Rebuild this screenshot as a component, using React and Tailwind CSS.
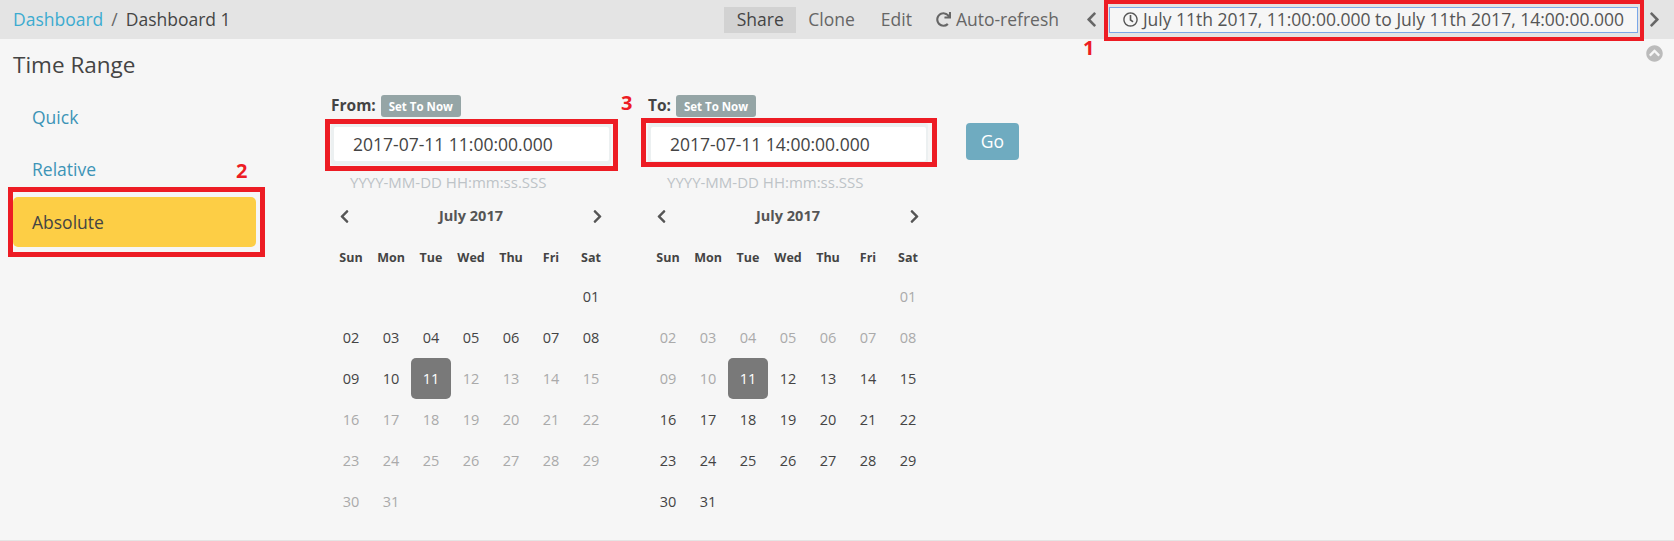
import React from 'react';
import { FaChevronLeft, FaChevronRight, FaChevronCircleUp, FaRegClock, FaRedo } from 'react-icons/fa';

const WEEK = ['Sun', 'Mon', 'Tue', 'Wed', 'Thu', 'Fri', 'Sat'];
const DAYS = Array.from({ length: 31 }, (_, i) => i + 1);

const Calendar = ({ activeFrom, activeTo }) => (
    <div className="w-[280px]">
        <div className="flex items-center justify-between h-[20px] px-[6px] text-[#555]">
            <FaChevronLeft className="text-[15px]" />
            <span className="text-[14.5px] font-bold">July 2017</span>
            <FaChevronRight className="text-[15px]" />
        </div>
        <div className="grid grid-cols-7 mt-[22px] h-[20px] items-center text-center text-[12.5px] font-bold text-[#444]">
            {WEEK.map((d) => (
                <div key={d}>{d}</div>
            ))}
        </div>
        <div className="grid grid-cols-7 auto-rows-[41px] mt-[8px] items-center justify-items-center text-center text-[14.5px]">
            <div className="col-span-6" />
            {DAYS.map((d) => {
                const label = String(d).padStart(2, '0');
                if (d === 11) {
                    return (
                        <div key={d} className="flex w-[40px] h-[41px] items-center justify-center rounded-[5px] bg-[#797979] text-white">
                            {label}
                        </div>
                    );
                }
                const active = d >= activeFrom && d <= activeTo;
                return (
                    <div key={d} className={active ? 'text-[#444]' : 'text-[#aaa]'}>
                        {label}
                    </div>
                );
            })}
        </div>
    </div>
);

const DateField = ({ label, value }) => (
    <div className="w-[280px]">
        <div className="flex items-center h-[22px]">
            <span className="text-[15.5px] font-bold text-[#444]">{label}</span>
            <span className="ml-[5px] flex h-[22px] w-[80px] items-center justify-center rounded-[3px] bg-[#95a5a6] pt-[1px] text-[11.5px] font-bold text-white">
                Set To Now
            </span>
        </div>
        <div className="mt-[6px] h-[42px] w-[280px] rounded-[3px] bg-[#ecf0f1] pt-[4px] pb-[4px] pl-[3px] pr-[2px]">
            <div className="flex h-[34px] items-center rounded-[2px] bg-white pl-[19px] text-[17.5px] text-[#444]">{value}</div>
        </div>
        <div className="mt-[6px] h-[22px] pl-[19px] text-[15px] leading-[22px] text-[#bdc3c7]">YYYY-MM-DD HH:mm:ss.SSS</div>
    </div>
);

const App = () => (
    <div className="relative h-[541px] w-[1674px] overflow-hidden border-b border-[#e4e4e4] bg-[#f6f6f6] font-['Open_Sans',sans-serif] text-[#444]">
        {/* Top bar */}
        <header className="flex h-[39px] items-center bg-[#e4e4e4] pl-[13px] pr-[11px] text-[17.5px]">
            <span className="text-[#3cabd0]">Dashboard</span>
            <span className="mx-[8px] text-[#666]">/</span>
            <span>Dashboard 1</span>
            <nav className="ml-auto flex items-center text-[#666]">
                <span className="flex h-[26px] w-[72px] items-center justify-center bg-[#d2d2d2] text-[#444]">Share</span>
                <span className="ml-[12px]">Clone</span>
                <span className="ml-[26px]">Edit</span>
                <span className="ml-[24px] flex items-center gap-[5px]">
                    <FaRedo className="text-[15px]" />
                    Auto-refresh
                </span>
                <FaChevronLeft className="ml-[24px] text-[17px]" />
                <div className="ml-[9px] flex h-[26px] w-[529px] items-center justify-center gap-[5px] border border-[#7aa7e8] bg-[#f6f6f6] text-[#555]">
                    <FaRegClock className="text-[15px]" />
                    July 11th 2017, 11:00:00.000 to July 11th 2017, 14:00:00.000
                </div>
                <FaChevronRight className="ml-[8px] text-[17px]" />
            </nav>
        </header>

        <main className="flex">
            {/* Sidebar */}
            <aside className="w-[331px] shrink-0 pl-[13px]">
                <h2 className="mt-[10px] text-[22.5px] leading-[32px] text-[#444]">Time Range</h2>
                <ul className="mt-[11px] w-[243px] text-[17.5px]">
                    <li className="flex h-[50px] items-center pl-[19px] text-[#3d94b6]">Quick</li>
                    <li className="mt-[2px] flex h-[50px] items-center pl-[19px] text-[#3d94b6]">Relative</li>
                    <li className="mt-[3px] flex h-[50px] items-center rounded-[5px] bg-[#fdce45] pl-[19px] text-[#444]">Absolute</li>
                </ul>
            </aside>

            {/* Pickers */}
            <section className="mt-[56px] flex gap-[37px]">
                <div>
                    <DateField label="From:" value="2017-07-11 11:00:00.000" />
                    <div className="mt-[13px]">
                        <Calendar activeFrom={1} activeTo={10} />
                    </div>
                </div>
                <div>
                    <DateField label="To:" value="2017-07-11 14:00:00.000" />
                    <div className="mt-[13px]">
                        <Calendar activeFrom={12} activeTo={31} />
                    </div>
                </div>
                <button className="ml-[1px] mt-[28px] flex h-[37px] w-[53px] items-center justify-center self-start rounded-[4px] bg-[#6fabc0] text-[17.5px] text-white">
                    Go
                </button>
            </section>
        </main>

        <FaChevronCircleUp className="absolute left-[1646px] top-[45px] text-[17px] text-[#bbb]" />

        {/* Red annotations drawn on the screenshot */}
        <div className="absolute left-[1104px] top-0 h-[41px] w-[540px] border-[4px] border-[#ed1c24]" />
        <div className="absolute left-[8px] top-[187px] h-[70px] w-[257px] border-[5px] border-[#ed1c24]" />
        <div className="absolute left-[325px] top-[119px] h-[52px] w-[293px] border-[5px] border-[#ed1c24]" />
        <div className="absolute left-[641px] top-[118px] h-[49px] w-[296px] border-[5px] border-[#ed1c24]" />
        <span className="absolute left-[1083px] top-[33px] text-[20px] font-bold text-[#ed1c24]">1</span>
        <span className="absolute left-[236px] top-[156px] text-[20px] font-bold text-[#ed1c24]">2</span>
        <span className="absolute left-[621px] top-[88px] text-[20px] font-bold text-[#ed1c24]">3</span>
    </div>
);

export default App;
